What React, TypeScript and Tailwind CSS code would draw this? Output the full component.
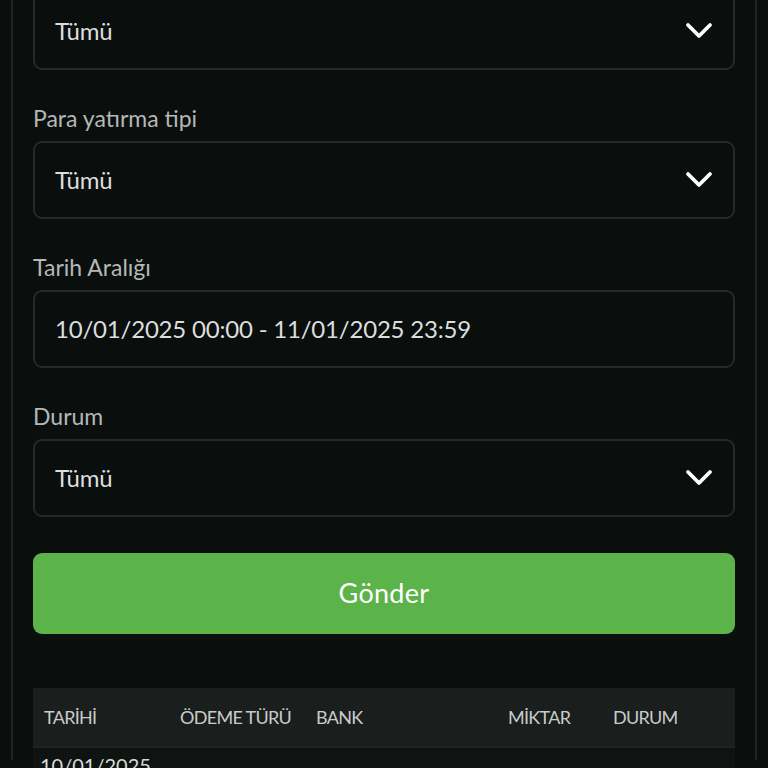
import React from 'react';

const Chevron = () => (
  <svg width="28" height="18" viewBox="0 0 28 18" fill="none" className="shrink-0">
    <polyline points="3,3 14,14 25,3" stroke="white" strokeWidth="3.8" strokeLinecap="round" strokeLinejoin="round" />
  </svg>
);

function Field({ label, value, select = true }: { label?: string; value: string; select?: boolean }) {
  return (
    <div className="flex flex-col">
      {label && <div className="text-[23px] leading-[32px] text-[#b4b8b6] mb-[7px]">{label}</div>}
      <div className="h-[78px] rounded-[9px] border-2 border-[#252a28] bg-[#0a0f0e] flex items-center justify-between pl-[20px] pr-[20px]">
        <span className="text-[24px] text-[#dcdedd] tracking-[-0.2px]">{value}</span>
        {select && <Chevron />}
      </div>
    </div>
  );
}

export default function App() {
  const headers = ['TARİHİ', 'ÖDEME TÜRÜ', 'BANK', 'MİKTAR', 'DURUM'];
  return (
    <div className="h-[768px] overflow-hidden bg-[#0a0f0e]" style={{ fontFamily: 'Lato, "Noto Sans", sans-serif' }}>
      <div className="mx-[11px] h-full border-x-2 border-[#1f2422] px-[20px]">
        <div className="-mt-[8px] flex flex-col gap-[32px]">
          <Field value="Tümü" />
          <Field label="Para yatırma tipi" value="Tümü" />
          <Field label="Tarih Aralığı" value="10/01/2025 00:00 - 11/01/2025 23:59" select={false} />
          <Field label="Durum" value="Tümü" />
        </div>

        <button className="mt-[36px] w-full h-[81px] rounded-[9px] bg-[#5cb34a] text-white text-[27px] tracking-[0.3px]">
          Gönder
        </button>

        <div className="mt-[54px]">
          <div className="grid grid-cols-[136px_136px_192px_105px_1fr] items-center h-[60px] bg-[#1a1e1d] border-b-2 border-[#202523] pl-[11px] text-[18px] text-[#c9cbca] tracking-[-0.7px]">
            {headers.map((h) => (
              <div key={h}>{h}</div>
            ))}
          </div>
          <div className="bg-[#0f1312] pl-[7px] pt-[2px] text-[20px] text-[#d8dad9] h-[80px]">10/01/2025</div>
        </div>
      </div>
    </div>
  );
}
